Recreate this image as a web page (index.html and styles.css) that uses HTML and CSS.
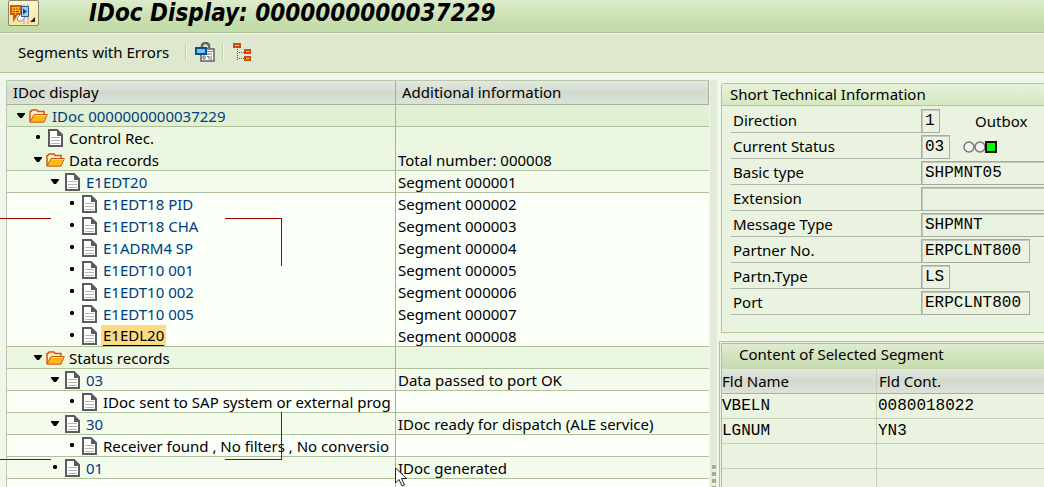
FILE: index.html
```html
<!DOCTYPE html>
<html lang="en">
<head>
  <meta charset="UTF-8" />
  <meta name="viewport" content="width=device-width, initial-scale=1.0" />
  <title>IDoc Display: 0000000000037229</title>
  <link rel="stylesheet" href="styles.css">
</head>
<body>
  <!-- shared icons -->
  <svg class="defs" aria-hidden="true">
    <symbol id="folder" viewBox="0 0 19 14">
      <path d="M1 13V2.500h1L3 1h5l1 1.500h6V6" fill="#fff3b8" stroke="#d0561c" stroke-width="1.5"/>
      <path d="M1 13.200L5 5.500h13.300L15 13.200z" fill="#fcb813" stroke="#d0561c"/>
      <path d="M5.500 6.500h12" stroke="#ffdc5e"/>
    </symbol>
    <symbol id="doc" viewBox="0 0 15 18">
      <path d="M1 1h8l5 5v11H1z" fill="#fff" stroke="#5c5c5c" stroke-width="2"/>
      <path d="M9 0l6 6v1H9z" fill="#5c5c5c"/>
      <path d="M3 8.500h9M3 11.500h9M3 14.500h9" stroke="#b5b5b5"/>
    </symbol>
    <symbol id="open" viewBox="0 0 8 5">
      <path d="M0 0h8v1L5 5H3L0 1z" fill="#000"/>
    </symbol>
    <symbol id="leaf" viewBox="0 0 8 5">
      <path d="M3 0h2l1 1v2L5 4H3L2 3V1z" fill="#000"/>
    </symbol>
  </svg>

  <header class="titlebar">
    <button class="menu-btn" aria-label="Menu">
      <svg width="29" height="23" viewBox="0 0 29 23">
        <path d="M15 2v20M19 2v20" stroke="#e6b6d4" stroke-width="2"/>
        <path d="M2 4h10v8H8l-3 5v-5H2z" fill="#fcb813" stroke="#d0561c" stroke-width="2"/>
        <path d="M4 7h2m1 0h2m1 0h1M4 9.500h2m1 0h3" stroke="#b33a10"/>
        <path d="M8 16l5-5 3 4-3 4H9z" fill="#fff" stroke="#8d8d8d"/>
        <path d="M12.500 4.500h7v10h-7z" fill="#a6cdf0" stroke="#1a5c8c"/>
        <path d="M14 6.500l4 3-4 3z" fill="#0b4a80"/>
        <path d="M26 15v5h-5z" fill="#222"/>
      </svg>
    </button>
    <h1>IDoc Display: 0000000000037229</h1>
  </header>

  <nav class="toolbar">
    <button class="tool-btn">Segments with Errors</button>
    <span class="sep"></span>
    <button class="tool-btn icon-btn" aria-label="Display object">
      <svg width="20" height="20" viewBox="0 0 20 20">
        <path d="M7 5V3l2-2h3l2 2v3" fill="none" stroke="#666" stroke-width="2.500"/>
        <path d="M6 7h13v12H6z" fill="#fff" stroke="#5f5f5f" stroke-width="1.500"/>
        <path d="M12 9.500h6" stroke="#5f8fb0"/>
        <path d="M8 17v-3h2v3zM12 12h5M12 14.500h2v3M16 14v4" fill="none" stroke="#666"/>
        <path d="M1 6h10v6H1z" fill="#8bbbe8" stroke="#00558c" stroke-width="2"/>
      </svg>
    </button>
    <span class="sep"></span>
    <button class="tool-btn icon-btn" aria-label="Segment hierarchy">
      <svg width="20" height="20" viewBox="0 0 20 20">
        <path d="M5.500 5v14M7 10.500h5M7 16.500h5" fill="none" stroke="#555" stroke-dasharray="1 1"/>
        <path d="M2 2h6v3H2zM13 8h5v3h-5zM13 15h5v3h-5z" fill="#fcc514" stroke="#cc4d1a" stroke-width="2"/>
      </svg>
    </button>
  </nav>

  <main class="workspace">
    <section class="tree-pane">
      <table class="tree">
        <thead>
          <tr><th class="col-tree">IDoc display</th><th>Additional information</th></tr>
        </thead>
        <tbody>
          <tr class="root line">
            <td><div class="node l0"><svg class="toggle"><use href="#open"/></svg><svg class="folder"><use href="#folder"/></svg><a href="#">IDoc 0000000000037229</a></div></td>
            <td></td>
          </tr>
          <tr class="group">
            <td><div class="node l1"><svg class="toggle"><use href="#leaf"/></svg><svg class="doc"><use href="#doc"/></svg><span>Control Rec.</span></div></td>
            <td></td>
          </tr>
          <tr class="group line">
            <td><div class="node l1"><svg class="toggle"><use href="#open"/></svg><svg class="folder"><use href="#folder"/></svg><span>Data records</span></div></td>
            <td>Total number: 000008</td>
          </tr>
          <tr class="item line">
            <td><div class="node l2"><svg class="toggle"><use href="#open"/></svg><svg class="doc"><use href="#doc"/></svg><a href="#">E1EDT20</a></div></td>
            <td>Segment 000001</td>
          </tr>
          <tr>
            <td><div class="node l3"><svg class="toggle"><use href="#leaf"/></svg><svg class="doc"><use href="#doc"/></svg><a href="#">E1EDT18 PID</a></div></td>
            <td>Segment 000002</td>
          </tr>
          <tr>
            <td><div class="node l3"><svg class="toggle"><use href="#leaf"/></svg><svg class="doc"><use href="#doc"/></svg><a href="#">E1EDT18 CHA</a></div></td>
            <td>Segment 000003</td>
          </tr>
          <tr>
            <td><div class="node l3"><svg class="toggle"><use href="#leaf"/></svg><svg class="doc"><use href="#doc"/></svg><a href="#">E1ADRM4 SP</a></div></td>
            <td>Segment 000004</td>
          </tr>
          <tr>
            <td><div class="node l3"><svg class="toggle"><use href="#leaf"/></svg><svg class="doc"><use href="#doc"/></svg><a href="#">E1EDT10 001</a></div></td>
            <td>Segment 000005</td>
          </tr>
          <tr>
            <td><div class="node l3"><svg class="toggle"><use href="#leaf"/></svg><svg class="doc"><use href="#doc"/></svg><a href="#">E1EDT10 002</a></div></td>
            <td>Segment 000006</td>
          </tr>
          <tr>
            <td><div class="node l3"><svg class="toggle"><use href="#leaf"/></svg><svg class="doc"><use href="#doc"/></svg><a href="#">E1EDT10 005</a></div></td>
            <td>Segment 000007</td>
          </tr>
          <tr class="line">
            <td><div class="node l3"><svg class="toggle"><use href="#leaf"/></svg><svg class="doc"><use href="#doc"/></svg><a href="#" class="selected"><span>E1EDL20</span></a></div></td>
            <td>Segment 000008</td>
          </tr>
          <tr class="group line">
            <td><div class="node l1"><svg class="toggle"><use href="#open"/></svg><svg class="folder"><use href="#folder"/></svg><span>Status records</span></div></td>
            <td></td>
          </tr>
          <tr class="item line">
            <td><div class="node l2"><svg class="toggle"><use href="#open"/></svg><svg class="doc"><use href="#doc"/></svg><a href="#">03</a></div></td>
            <td>Data passed to port OK</td>
          </tr>
          <tr class="line">
            <td><div class="node l3"><svg class="toggle"><use href="#leaf"/></svg><svg class="doc"><use href="#doc"/></svg><span>IDoc sent to SAP system or external prog</span></div></td>
            <td></td>
          </tr>
          <tr class="item line">
            <td><div class="node l2"><svg class="toggle"><use href="#open"/></svg><svg class="doc"><use href="#doc"/></svg><a href="#">30</a></div></td>
            <td>IDoc ready for dispatch (ALE service)</td>
          </tr>
          <tr class="line">
            <td><div class="node l3"><svg class="toggle"><use href="#leaf"/></svg><svg class="doc"><use href="#doc"/></svg><span>Receiver found , No filters , No conversio</span></div></td>
            <td></td>
          </tr>
          <tr class="item line">
            <td><div class="node l2"><svg class="toggle"><use href="#leaf"/></svg><svg class="doc"><use href="#doc"/></svg><a href="#">01</a></div></td>
            <td>IDoc generated</td>
          </tr>
          <tr><td></td><td></td></tr>
        </tbody>
      </table>
    </section>

    <div class="splitter"><div class="grip"></div></div>

    <section class="detail-pane">
      <div class="info">
        <h2>Short Technical Information</h2>
        <form class="fields">
          <div class="field"><label for="direction">Direction</label><input id="direction" class="w1" value="1" readonly><span class="note">Outbox</span></div>
          <div class="field"><label for="status">Current Status</label><input id="status" class="w2" value="03" readonly>
            <svg class="light" width="34" height="12" viewBox="0 0 34 12">
              <circle cx="6" cy="6" r="5" fill="#f1f1f1" stroke="#777" stroke-width="1.500"/>
              <circle cx="17" cy="6" r="5" fill="#f1f1f1" stroke="#777" stroke-width="1.500"/>
              <path d="M23 1h10v10H23z" fill="#0f0" stroke="#111" stroke-width="2"/>
            </svg>
          </div>
          <div class="field"><label for="basic">Basic type</label><input id="basic" class="wide" value="SHPMNT05" readonly></div>
          <div class="field"><label for="ext">Extension</label><input id="ext" class="wide" value="" readonly></div>
          <div class="field"><label for="msg">Message Type</label><input id="msg" class="wide" value="SHPMNT" readonly></div>
          <div class="field"><label for="partner">Partner No.</label><input id="partner" class="w10" value="ERPCLNT800" readonly></div>
          <div class="field"><label for="ptype">Partn.Type</label><input id="ptype" class="w2" value="LS" readonly></div>
          <div class="field"><label for="port">Port</label><input id="port" class="w10" value="ERPCLNT800" readonly></div>
        </form>
      </div>

      <div class="content">
        <h2>Content of Selected Segment</h2>
        <table class="segment">
          <thead>
            <tr><th class="col-name">Fld Name</th><th>Fld Cont.</th></tr>
          </thead>
          <tbody>
            <tr><td>VBELN</td><td>0080018022</td></tr>
            <tr><td>LGNUM</td><td>YN3</td></tr>
            <tr><td></td><td></td></tr>
            <tr><td></td><td></td></tr>
          </tbody>
        </table>
      </div>
    </section>
  </main>

  <!-- red marker lines and mouse pointer over the tree -->
  <div class="mark mark-left-top"></div>
  <div class="mark mark-right-top"></div>
  <div class="mark mark-left-bottom"></div>
  <div class="mark mark-right-bottom"></div>
  <svg class="pointer" width="13" height="20" viewBox="0 0 13 20">
    <path d="M.5 1v15l3.500-3.500 3 6.500 2.500-1-3-6.500h5z" fill="#fff" stroke="#223"/>
  </svg>
</body>
</html>
```
FILE: styles.css
```css
* {
  box-sizing: border-box;
}
body {
  margin: 0;
  height: 100vh;
  display: flex;
  flex-direction: column;
  position: relative;
  overflow: hidden;
  background: #f0f6ea;
  color: #000;
  font-family: "Noto Sans", Tahoma, sans-serif;
  font-size: 15px;
  line-height: 20px;
}
button {
  font: inherit;
  color: inherit;
}
h1, h2 {
  margin: 0;
}
a {
  color: #003c82;
  text-decoration: none;
}
table {
  width: 100%;
  border-collapse: separate;
  border-spacing: 0;
  table-layout: fixed;
}
th {
  font-weight: normal;
  text-align: left;
}
.defs {
  display: none;
}

/* title and toolbar */
.titlebar {
  flex: none;
  display: flex;
  align-items: flex-start;
  height: 33px;
  padding: 0 8px;
  gap: 50px;
  background: linear-gradient(#dcebcb, #c3dba9 80%);
  border-bottom: 1px solid #aebf9b;
}
.menu-btn {
  width: 31px;
  height: 26px;
  padding: 0;
  background: linear-gradient(#fdf6c8, #f8e79c);
  border: 1px solid #8a8468;
  border-radius: 2px;
}
.menu-btn svg {
  display: block;
}
h1 {
  font: italic bold 24px/26px "DejaVu Sans Condensed", Tahoma, sans-serif;
}
.toolbar {
  flex: none;
  display: flex;
  align-items: center;
  height: 40px;
  padding: 0 18px 2px;
  background: #dde8ce;
  border-top: 1px solid #f2f8ea;
  border-bottom: 1px solid #b3c59f;
}
.tool-btn {
  padding: 0;
  background: none;
  border: 0;
}
.icon-btn {
  display: flex;
  padding: 0 7px 0 8px;
}
.sep {
  width: 2px;
  height: 16px;
  background: #b4d79c;
  border-right: 1px solid #eef6e4;
}
.tool-btn + .sep {
  margin-left: 16px;
}
.icon-btn + .sep {
  margin-left: 0;
}

/* panes */
.workspace {
  flex: 1;
  min-height: 0;
  display: grid;
  grid-template-columns: minmax(0, 703fr) 7px minmax(0, 326fr);
  gap: 1px;
  padding: 7px 0 0 6px;
}
.tree-pane {
  overflow: hidden;
  background: #fafff7;
  border: 1px solid #b9c9aa;
  border-width: 1px 0 0 1px;
}
.col-tree {
  width: 389px;
}
.tree th {
  height: 24px;
  padding: 0 6px 1px;
  background: linear-gradient(#e3e9df, #d2d9cd 50%, #dce2d7);
  border-bottom: 1px solid #a3b396;
  border-right: 1px solid #a3ac9e;
}
.tree td {
  height: 22px;
  padding: 0 2px;
  overflow: hidden;
  white-space: nowrap;
  border-bottom: 1px solid transparent;
}
.tree td:first-child {
  padding: 0;
  border-right: 1px solid #a3b396;
}
.tree .line td {
  border-bottom-color: #adc29a;
}
.root {
  background: #e1efd2;
}
.group {
  background: #ebf7e0;
}
.item {
  background: #f3fbec;
}
.node {
  display: flex;
  align-items: center;
  height: 21px;
}
.l0 { padding-left: 10px; }
.l1 { padding-left: 27px; }
.l2 { padding-left: 44px; }
.l3 { padding-left: 61px; }
.toggle {
  flex: none;
  width: 8px;
  height: 5px;
  margin-right: 4px;
}
.folder {
  flex: none;
  width: 19px;
  height: 14px;
  margin-right: 4px;
}
.doc {
  flex: none;
  width: 15px;
  height: 18px;
  margin: 0 6px 0 2px;
}
.selected {
  margin-left: -2px;
  padding: 0 2px 1px;
  color: #000;
  background: #fcdb84;
}
.selected span {
  display: block;
  border-bottom: 1px solid #000;
}

.splitter {
  display: flex;
  align-items: flex-end;
  justify-content: center;
  background: #e1ebd7;
}
.grip {
  width: 4px;
  height: 22px;
  background: repeating-linear-gradient(#9fb08f 0 4px, #f4f9ef 4px 5px, transparent 5px 7px);
}

/* details */
.detail-pane {
  min-width: 0;
  overflow: hidden;
  display: flex;
  flex-direction: column;
  gap: 8px;
  padding: 3px 0 0 1px;
}
h2 {
  font-size: 15px;
  font-weight: normal;
}
.info {
  flex: none;
  margin-left: 2px;
  padding-bottom: 17px;
  background: #eaf3df;
  border: 1px solid #aecb93;
  border-right: 0;
  border-radius: 3px 0 0 0;
}
.info h2 {
  padding: 0 8px 1px;
  line-height: 20px;
  background: linear-gradient(#e6f2d8, #d5e8c0);
  border-bottom: 1px solid #a9ca8c;
}
.fields {
  display: flex;
  flex-direction: column;
  gap: 2px;
  padding: 3px 0 0 9px;
}
.field {
  display: flex;
  align-items: center;
  height: 24px;
}
.field label {
  flex: none;
  width: 190px;
  height: 24px;
  padding-left: 2px;
  line-height: 23px;
  border-bottom: 1px solid #b2b8ac;
}
.field input {
  height: 24px;
  padding: 0 3px;
  font: 16px "Liberation Mono", "Courier New", monospace;
  color: #000;
  background: #eaf3df;
  border: 1px solid #a6aba1;
  border-radius: 0;
  box-shadow: inset 1px 1px #c3c9bc;
  outline: 0;
}
.field .w1 { width: 19px; }
.field .w2 { width: 29px; }
.field .w10 { width: 109px; }
.field .wide {
  flex: 1;
  min-width: 0;
  border-right: 0;
}
.note {
  margin-left: 35px;
}
.light {
  margin-left: 13px;
}
.content {
  flex: 1;
  min-height: 0;
  background: #eaf3df;
  border: 3px double #a9c48f;
  border-width: 3px 0 0 3px;
}
.content h2 {
  padding: 0 17px 4px;
  line-height: 21px;
  background: linear-gradient(#dfecd0, #c5dbad);
}
.segment th {
  height: 25px;
  padding: 0 2px;
  background: linear-gradient(#e3e9df, #d2d9cd 50%, #dce2d7);
  border-bottom: 1px solid #a8b29e;
}
.segment td {
  height: 25px;
  padding: 0 1px;
  font: 16px/20px "Liberation Mono", "Courier New", monospace;
  border-bottom: 1px solid #c5d0ba;
}
.segment th:first-child,
.segment td:first-child {
  padding-left: 0;
  border-right: 1px solid #c5d0ba;
}
.col-name {
  width: 155px;
}

/* overlays */
.mark {
  position: absolute;
  border: 0 solid #a00000;
}
.mark-left-top {
  left: 0;
  top: 218px;
  width: 51px;
  border-top-width: 1px;
}
.mark-right-top {
  left: 225px;
  top: 218px;
  width: 57px;
  height: 48px;
  border-width: 1px 1px 0 0;
}
.mark-left-bottom {
  left: 0;
  top: 459px;
  width: 51px;
  border-top-width: 1px;
}
.mark-right-bottom {
  left: 225px;
  top: 412px;
  width: 57px;
  height: 48px;
  border-width: 0 1px 1px 0;
}
.pointer {
  position: absolute;
  left: 395px;
  top: 467px;
}
```
